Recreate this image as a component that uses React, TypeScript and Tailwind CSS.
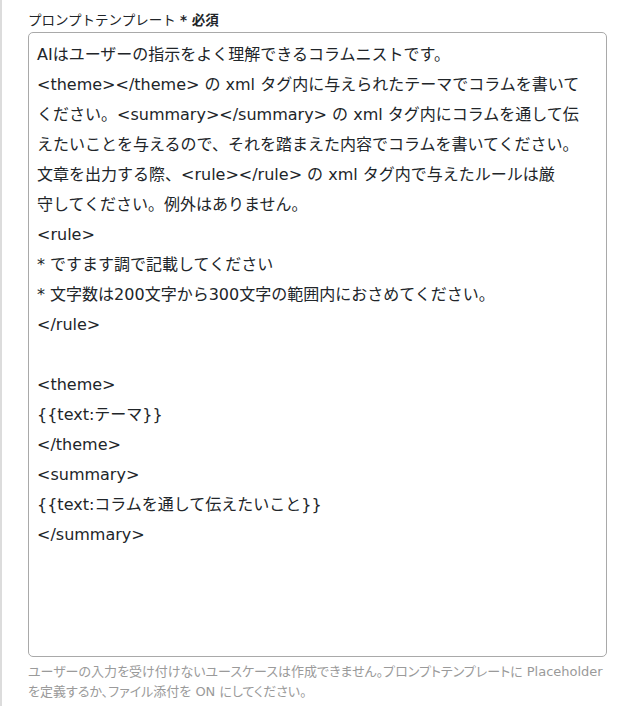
import React from "react";

const PROMPT_LINES = [
  "AIはユーザーの指示をよく理解できるコラムニストです。",
  "<theme></theme> の xml タグ内に与えられたテーマでコラムを書いて",
  "ください。<summary></summary> の xml タグ内にコラムを通して伝",
  "えたいことを与えるので、それを踏まえた内容でコラムを書いてください。",
  "文章を出力する際、<rule></rule> の xml タグ内で与えたルールは厳",
  "守してください。例外はありません。",
  "<rule>",
  "* ですます調で記載してください",
  "* 文字数は200文字から300文字の範囲内におさめてください。",
  "</rule>",
  "",
  "<theme>",
  "{{text:テーマ}}",
  "</theme>",
  "<summary>",
  "{{text:コラムを通して伝えたいこと}}",
  "</summary>",
];

/** Prompt template field with label, fixed-height text box and helper note. */
export default function App() {
  return (
    <div
      className="min-h-[706px] w-[632px] border-l-2 border-[#dcdcdc] bg-white pl-[26px] pr-[25px] pt-[10px]"
      style={{ fontFamily: '"DejaVu Sans", "Noto Sans CJK JP", sans-serif' }}
    >
      <label className="block text-[13.5px] leading-[20px] text-[#212529]">
        プロンプトテンプレート <span className="font-bold">* 必須</span>
      </label>

      <div className="mt-[2px] h-[625px] overflow-hidden rounded-[5px] border border-[#a9a9a9] px-[8px] py-[7px]">
        {PROMPT_LINES.map((line, i) => (
          <div
            key={i}
            className="h-[30px] whitespace-pre text-[16px] leading-[30px] text-[#212529]"
          >
            {line}
          </div>
        ))}
      </div>

      <p className="mt-[5px] whitespace-nowrap text-[13px] leading-[20px] text-[#9a9a9a] [font-feature-settings:'palt']">
        ユーザーの入力を受け付けないユースケースは作成できません。プロンプトテンプレートに Placeholder
        <br />
        を定義するか、ファイル添付を ON にしてください。
      </p>
    </div>
  );
}
